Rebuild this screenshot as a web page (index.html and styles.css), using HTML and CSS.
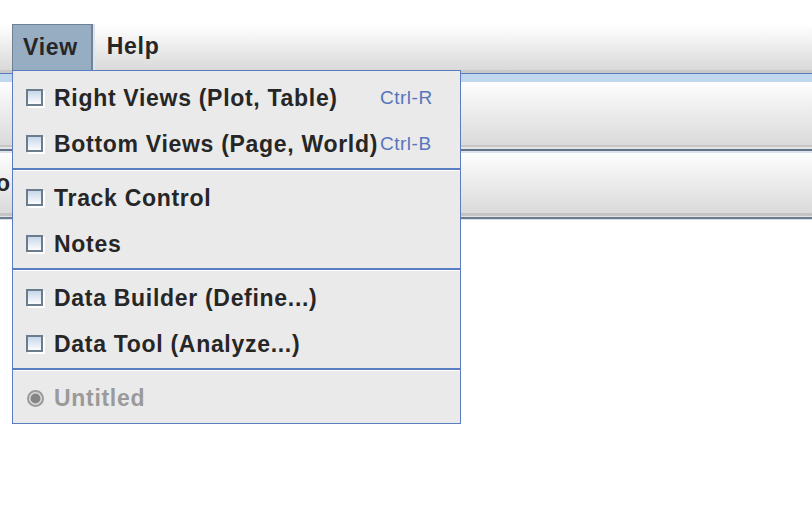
FILE: index.html
```html
<!DOCTYPE html>
<html>
<head>
<meta charset="utf-8">
<title>View menu</title>
<link rel="stylesheet" href="styles.css">
</head>
<body>
<div class="app">
  <div class="topgap"></div>
  <nav class="menubar">
    <div class="menu menu-active">View</div>
    <div class="menu menu-help">Help</div>
  </nav>
  <div class="strip"></div>
  <div class="toolbar tb1"></div>
  <div class="divider"></div>
  <div class="toolbar tb2"><span class="cut">o</span></div>
  <div class="divider2"></div>
</div>

<div class="popup">
  <div class="item">
    <svg class="check" width="19" height="19" viewBox="0 0 19 19"><defs><linearGradient id="cg1" x1="0" y1="0" x2="0" y2="1"><stop offset="0" stop-color="#c3d4e8"/><stop offset="1" stop-color="#ffffff"/></linearGradient></defs><rect x="3" y="3" width="15" height="15" fill="none" stroke="#ffffff" stroke-width="2"/><rect x="1" y="1" width="15" height="15" fill="url(#cg1)" stroke="#6b7c8d" stroke-width="2"/></svg>
    <span class="label">Right Views (Plot, Table)</span>
    <span class="key">Ctrl-R</span>
  </div>
  <div class="item">
    <svg class="check" width="19" height="19" viewBox="0 0 19 19"><rect x="3" y="3" width="15" height="15" fill="none" stroke="#ffffff" stroke-width="2"/><rect x="1" y="1" width="15" height="15" fill="url(#cg1)" stroke="#6b7c8d" stroke-width="2"/></svg>
    <span class="label">Bottom Views (Page, World)</span>
    <span class="key">Ctrl-B</span>
  </div>
  <div class="sep"></div>
  <div class="item">
    <svg class="check" width="19" height="19" viewBox="0 0 19 19"><rect x="3" y="3" width="15" height="15" fill="none" stroke="#ffffff" stroke-width="2"/><rect x="1" y="1" width="15" height="15" fill="url(#cg1)" stroke="#6b7c8d" stroke-width="2"/></svg>
    <span class="label">Track Control</span>
  </div>
  <div class="item">
    <svg class="check" width="19" height="19" viewBox="0 0 19 19"><rect x="3" y="3" width="15" height="15" fill="none" stroke="#ffffff" stroke-width="2"/><rect x="1" y="1" width="15" height="15" fill="url(#cg1)" stroke="#6b7c8d" stroke-width="2"/></svg>
    <span class="label">Notes</span>
  </div>
  <div class="sep"></div>
  <div class="item">
    <svg class="check" width="19" height="19" viewBox="0 0 19 19"><rect x="3" y="3" width="15" height="15" fill="none" stroke="#ffffff" stroke-width="2"/><rect x="1" y="1" width="15" height="15" fill="url(#cg1)" stroke="#6b7c8d" stroke-width="2"/></svg>
    <span class="label">Data Builder (Define...)</span>
  </div>
  <div class="item">
    <svg class="check" width="19" height="19" viewBox="0 0 19 19"><rect x="3" y="3" width="15" height="15" fill="none" stroke="#ffffff" stroke-width="2"/><rect x="1" y="1" width="15" height="15" fill="url(#cg1)" stroke="#6b7c8d" stroke-width="2"/></svg>
    <span class="label">Data Tool (Analyze...)</span>
  </div>
  <div class="sep"></div>
  <div class="item item-disabled">
    <svg class="check" width="19" height="19" viewBox="0 0 19 19"><circle cx="9.5" cy="9.5" r="7.5" fill="#dcdcdc" stroke="#9a9a9a" stroke-width="2"/><circle cx="9.5" cy="9.5" r="5" fill="#858585"/></svg>
    <span class="label">Untitled</span>
  </div>
</div>
</body>
</html>
```

FILE: styles.css
```css
html, body {
  margin: 0;
  padding: 0;
  background: #ffffff;
}

body {
  font-family: "Liberation Sans", Arial, sans-serif;
  width: 812px;
  height: 514px;
  overflow: hidden;
  position: relative;
}

.app {
  display: flex;
  flex-direction: column;
}

.topgap {
  height: 24px;
}

.menubar {
  height: 46px;
  display: flex;
  align-items: stretch;
  padding-left: 12px;
  background: linear-gradient(#ffffff 0%, #f6f6f6 25%, #d9d9d9 100%);
}

.menu {
  font-size: 23px;
  font-weight: bold;
  letter-spacing: 0.7px;
  color: #262626;
  line-height: 44px;
  padding: 0 12px 2px 12px;
}

.menu-active {
  background: #96adc2;
  border-top: 1px solid #6f8093;
  border-left: 1px solid #6f8093;
  border-right: 2px solid #6f8296;
  box-shadow: 2px 0 0 #dde4eb;
  padding: 0 13px 1px 10px;
  margin-right: 2px;
}

.strip {
  height: 12px;
  background: linear-gradient(#c9c9c9 0, #c9c9c9 3px, #5b7ec2 3px, #5b7ec2 4px, #c0d7ee 4px, #c0d7ee 12px);
}

.toolbar {
  background: linear-gradient(#fefefe 0%, #f4f4f4 25%, #dadada 100%);
}

.tb1 {
  height: 63px;
}

.tb2 {
  height: 60px;
  display: flex;
  align-items: center;
}

.cut {
  font-size: 23px;
  font-weight: bold;
  color: #262626;
  margin-left: -4px;
  line-height: 24px;
}

.divider {
  height: 8px;
  background: linear-gradient(#c6c6c6 0, #c6c6c6 2px, #e4e4e4 2px, #e4e4e4 4px, #607389 4px, #607389 6px, #dce3ea 6px, #dce3ea 8px);
}

.divider2 {
  height: 7px;
  background: linear-gradient(#c4c4c4 0, #c4c4c4 3px, #e2e2e2 3px, #e2e2e2 4px, #6a7c90 4px, #6a7c90 6px, #d8e0e8 6px, #d8e0e8 7px);
}

.popup {
  position: absolute;
  left: 12px;
  top: 70px;
  width: 449px;
  height: 354px;
  box-sizing: border-box;
  border: 1px solid #5a7cc0;
  background: #eaeaea;
  padding: 4px 0 2px 0;
  display: flex;
  flex-direction: column;
}

.item {
  height: 46px;
  display: flex;
  align-items: center;
  padding-left: 13px;
  white-space: nowrap;
}

.check {
  flex: 0 0 19px;
  margin-right: 9px;
}

.label {
  flex: 0 0 326px;
  font-size: 23px;
  font-weight: bold;
  letter-spacing: 0.7px;
  color: #262626;
  line-height: 46px;
}

.key {
  font-size: 19px;
  letter-spacing: 0.5px;
  color: #5775bc;
  line-height: 46px;
}

.item-disabled .label {
  color: #9a9a9a;
}

.sep {
  margin-top: 1px;
  margin-bottom: 4px;
  border-top: 2px solid #5a7cc0;
  border-bottom: 1px solid #ffffff;
}
```
